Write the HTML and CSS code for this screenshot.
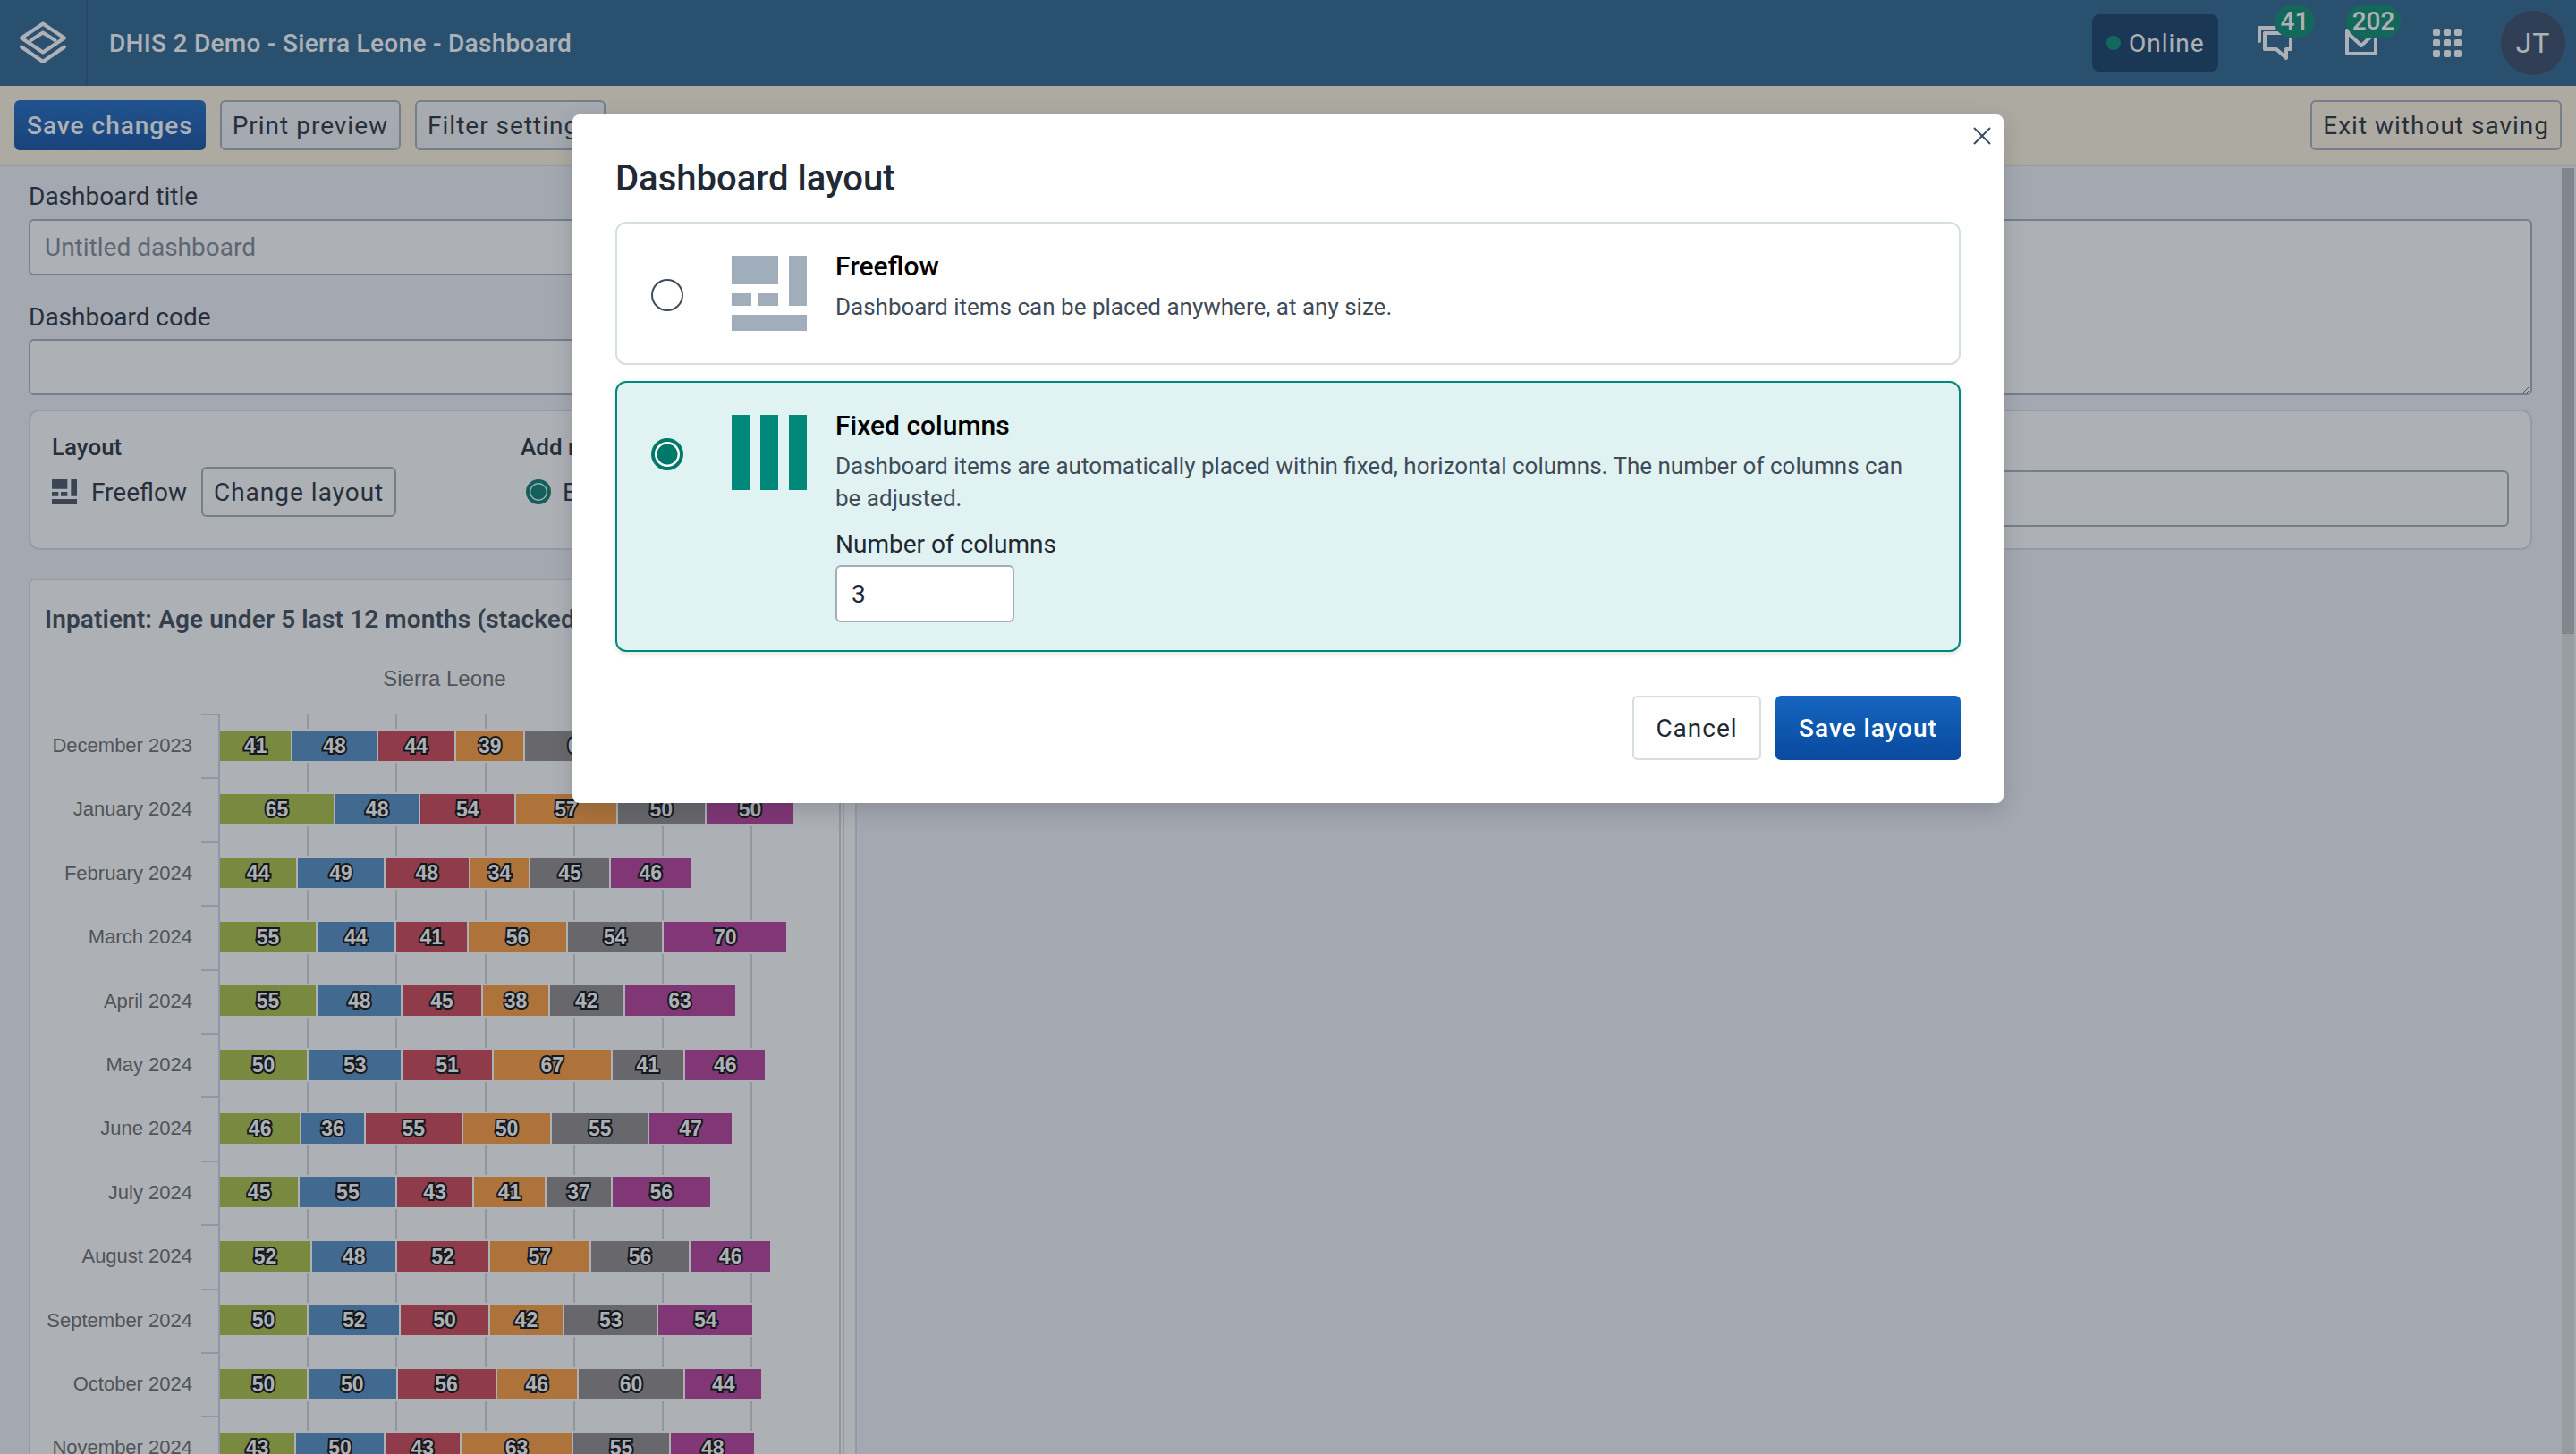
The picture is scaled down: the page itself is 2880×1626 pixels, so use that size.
FILE: index.html
```html
<!DOCTYPE html>
<html lang="en">

<head>
  <meta charset="UTF-8">
  <title>DHIS 2 Demo - Sierra Leone - Dashboard</title>
  <link rel="stylesheet" href="styles.css">
</head>

<body>
  <header class="topbar">
    <div class="logo">
      <svg width="96" height="96" viewBox="0 0 96 96" fill="none" stroke="#fff" stroke-width="4" stroke-linejoin="round" stroke-linecap="round">
        <path d="M24 42.5L48 26.5L72 42.5L48 58.5Z" />
        <path d="M34.5 45L48 36.5L61.500 45" />
        <path d="M24 52.500L48 69L72 52.500" />
      </svg>
    </div>
    <div class="instance-title">DHIS 2 Demo - Sierra Leone - Dashboard</div>
    <div class="online"><span class="online-dot"></span>Online</div>
    <div class="header-icon icon-messages">
      <svg width="40" height="40" viewBox="0 0 40 40" fill="none" stroke="#fff" stroke-width="4" stroke-linejoin="round" stroke-linecap="round">
        <path d="M2 18V3H19" />
        <path d="M8 9H37V27H32V37L21 27H8Z" />
      </svg>
      <span class="badge badge-messages">41</span>
    </div>
    <div class="header-icon icon-mail">
      <svg width="40" height="40" viewBox="0 0 40 40" fill="none" stroke="#fff" stroke-width="4" stroke-linejoin="round" stroke-linecap="round">
        <path d="M4 6H36V32H4Z" />
        <path d="M4 8L20 23L36 8" />
      </svg>
      <span class="badge badge-mail">202</span>
    </div>
    <div class="apps">
      <i></i><i></i><i></i><i></i><i></i><i></i><i></i><i></i><i></i>
    </div>
    <div class="avatar">JT</div>
  </header>

  <div class="edit-bar">
    <button class="btn btn-primary">Save changes</button>
    <button class="btn">Print preview</button>
    <button class="btn">Filter settings</button>
    <button class="btn btn-exit">Exit without saving</button>
  </div>

  <div class="page">
    <main class="content">
      <div class="form-grid">
        <div>
          <label class="field-label">Dashboard title</label>
          <input class="text-input" placeholder="Untitled dashboard">
          <label class="field-label field-label-second">Dashboard code</label>
          <input class="text-input">
        </div>
        <div>
          <label class="field-label">Description</label>
          <textarea class="text-area"></textarea>
        </div>
      </div>

      <section class="options">
        <div class="option-layout">
          <div class="option-title">Layout</div>
          <div class="option-row">
            <svg class="small-icon" width="28" height="28" viewBox="0 0 84 84">
              <path d="M0 0H52V32H0ZM64 0H84V56H64ZM0 42H22V56H0ZM30 42H52V56H30ZM0 66H84V84H0Z" />
            </svg>
            <span class="option-value">Freeflow</span>
            <button class="btn btn-plain">Change layout</button>
          </div>
        </div>
        <div class="option-add">
          <div class="option-title">Add new items to</div>
          <div class="option-row">
            <span class="radio radio-small"></span>
            <span class="option-value">End of dashboard</span>
          </div>
        </div>
        <input class="text-input option-input">
      </section>

      <div class="chart-wrap">
        <section class="chart-card">
          <h2 class="chart-title">Inpatient: Age under 5 last 12 months (stacked)</h2>
          <div class="chart-subtitle">Sierra Leone</div>
          <div class="chart-body">
            <div class="chart-labels">
              <div>December 2023</div>
              <div>January 2024</div>
              <div>February 2024</div>
              <div>March 2024</div>
              <div>April 2024</div>
              <div>May 2024</div>
              <div>June 2024</div>
              <div>July 2024</div>
              <div>August 2024</div>
              <div>September 2024</div>
              <div>October 2024</div>
              <div>November 2024</div>
            </div>
            <div class="chart-plot">
              <div class="plot-row"><div class="bar">
                <span class="seg s1" style="--v:41">41</span><span class="seg s2" style="--v:48">48</span><span class="seg s3" style="--v:44">44</span><span class="seg s4" style="--v:39">39</span><span class="seg s5" style="--v:62">62</span><span class="seg s6" style="--v:50">50</span>
              </div></div>
              <div class="plot-row"><div class="bar">
                <span class="seg s1" style="--v:65">65</span><span class="seg s2" style="--v:48">48</span><span class="seg s3" style="--v:54">54</span><span class="seg s4" style="--v:57">57</span><span class="seg s5" style="--v:50">50</span><span class="seg s6" style="--v:50">50</span>
              </div></div>
              <div class="plot-row"><div class="bar">
                <span class="seg s1" style="--v:44">44</span><span class="seg s2" style="--v:49">49</span><span class="seg s3" style="--v:48">48</span><span class="seg s4" style="--v:34">34</span><span class="seg s5" style="--v:45">45</span><span class="seg s6" style="--v:46">46</span>
              </div></div>
              <div class="plot-row"><div class="bar">
                <span class="seg s1" style="--v:55">55</span><span class="seg s2" style="--v:44">44</span><span class="seg s3" style="--v:41">41</span><span class="seg s4" style="--v:56">56</span><span class="seg s5" style="--v:54">54</span><span class="seg s6" style="--v:70">70</span>
              </div></div>
              <div class="plot-row"><div class="bar">
                <span class="seg s1" style="--v:55">55</span><span class="seg s2" style="--v:48">48</span><span class="seg s3" style="--v:45">45</span><span class="seg s4" style="--v:38">38</span><span class="seg s5" style="--v:42">42</span><span class="seg s6" style="--v:63">63</span>
              </div></div>
              <div class="plot-row"><div class="bar">
                <span class="seg s1" style="--v:50">50</span><span class="seg s2" style="--v:53">53</span><span class="seg s3" style="--v:51">51</span><span class="seg s4" style="--v:67">67</span><span class="seg s5" style="--v:41">41</span><span class="seg s6" style="--v:46">46</span>
              </div></div>
              <div class="plot-row"><div class="bar">
                <span class="seg s1" style="--v:46">46</span><span class="seg s2" style="--v:36">36</span><span class="seg s3" style="--v:55">55</span><span class="seg s4" style="--v:50">50</span><span class="seg s5" style="--v:55">55</span><span class="seg s6" style="--v:47">47</span>
              </div></div>
              <div class="plot-row"><div class="bar">
                <span class="seg s1" style="--v:45">45</span><span class="seg s2" style="--v:55">55</span><span class="seg s3" style="--v:43">43</span><span class="seg s4" style="--v:41">41</span><span class="seg s5" style="--v:37">37</span><span class="seg s6" style="--v:56">56</span>
              </div></div>
              <div class="plot-row"><div class="bar">
                <span class="seg s1" style="--v:52">52</span><span class="seg s2" style="--v:48">48</span><span class="seg s3" style="--v:52">52</span><span class="seg s4" style="--v:57">57</span><span class="seg s5" style="--v:56">56</span><span class="seg s6" style="--v:46">46</span>
              </div></div>
              <div class="plot-row"><div class="bar">
                <span class="seg s1" style="--v:50">50</span><span class="seg s2" style="--v:52">52</span><span class="seg s3" style="--v:50">50</span><span class="seg s4" style="--v:42">42</span><span class="seg s5" style="--v:53">53</span><span class="seg s6" style="--v:54">54</span>
              </div></div>
              <div class="plot-row"><div class="bar">
                <span class="seg s1" style="--v:50">50</span><span class="seg s2" style="--v:50">50</span><span class="seg s3" style="--v:56">56</span><span class="seg s4" style="--v:46">46</span><span class="seg s5" style="--v:60">60</span><span class="seg s6" style="--v:44">44</span>
              </div></div>
              <div class="plot-row"><div class="bar">
                <span class="seg s1" style="--v:43">43</span><span class="seg s2" style="--v:50">50</span><span class="seg s3" style="--v:43">43</span><span class="seg s4" style="--v:63">63</span><span class="seg s5" style="--v:55">55</span><span class="seg s6" style="--v:48">48</span>
              </div></div>
            </div>
          </div>
        </section>
      </div>
    </main>
    <div class="scrollbar"><div class="scrollbar-thumb"></div></div>
  </div>

  <div class="overlay">
    <div class="modal">
      <svg class="modal-close" width="20" height="20" viewBox="0 0 20 20" fill="none" stroke="#404b5a" stroke-width="2">
        <path d="M1 1L19 19M19 1L1 19" />
      </svg>
      <h1 class="modal-title">Dashboard layout</h1>

      <div class="layout-card">
        <span class="radio"></span>
        <svg class="layout-icon icon-freeflow" width="84" height="84" viewBox="0 0 84 84">
          <path d="M0 0H52V32H0ZM64 0H84V56H64ZM0 42H22V56H0ZM30 42H52V56H30ZM0 66H84V84H0Z" />
        </svg>
        <div class="layout-text">
          <div class="layout-name">Freeflow</div>
          <p class="layout-desc">Dashboard items can be placed anywhere, at any size.</p>
        </div>
      </div>

      <div class="layout-card layout-card-selected">
        <span class="radio radio-checked"></span>
        <svg class="layout-icon icon-columns" width="84" height="84" viewBox="0 0 84 84">
          <path d="M0 0H20V84H0ZM32 0H52V84H32ZM64 0H84V84H64Z" />
        </svg>
        <div class="layout-text">
          <div class="layout-name">Fixed columns</div>
          <p class="layout-desc">Dashboard items are automatically placed within fixed, horizontal columns. The number of columns can be adjusted.</p>
          <label class="columns-label">Number of columns</label>
          <input class="columns-input" value="3">
        </div>
      </div>

      <div class="modal-actions">
        <button class="btn btn-cancel">Cancel</button>
        <button class="btn btn-primary btn-large">Save layout</button>
      </div>
    </div>
  </div>
</body>

</html>
```
FILE: styles.css
```css
* {
  box-sizing: border-box;
}

html,
body {
  height: 100%;
  margin: 0;
  overflow: hidden;
}

body {
  display: flex;
  flex-direction: column;
  position: relative;
  background: #f0f2f8;
  color: #212934;
  font-family: Roboto, "Noto Sans", sans-serif;
  font-size: 28px;
}

/* header */
.topbar {
  display: flex;
  align-items: center;
  flex: none;
  height: 96px;
  background: #255f8c;
  color: #fff;
}

.logo {
  flex: none;
  width: 98px;
  height: 96px;
  border-right: 2px solid #1f5480;
}

.instance-title {
  flex: 1;
  padding-left: 24px;
  font-weight: 500;
  letter-spacing: 0.3px;
}

.online {
  display: flex;
  align-items: center;
  width: 141px;
  height: 64px;
  padding-left: 16px;
  border-radius: 8px;
  background: #0a375f;
  letter-spacing: 1px;
}

.online-dot {
  width: 16px;
  height: 16px;
  margin-right: 9px;
  border-radius: 50%;
  background: #008769;
}

.header-icon {
  position: relative;
  flex: none;
  width: 40px;
  height: 40px;
}

.icon-messages {
  margin-left: 44px;
}

.icon-mail {
  margin-left: 56px;
}

.badge {
  position: absolute;
  top: -22px;
  height: 36px;
  border-radius: 18px;
  background: #008769;
  font-size: 28px;
  font-weight: 500;
  line-height: 36px;
  text-align: center;
}

.badge-messages {
  left: 19px;
  width: 45px;
}

.badge-mail {
  left: 3px;
  width: 61px;
}

.apps {
  display: grid;
  flex: none;
  grid-template-columns: repeat(3, 8px);
  gap: 4px;
  margin-left: 60px;
}

.apps i {
  height: 8px;
  border-radius: 2px;
  background: #fff;
}

.avatar {
  flex: none;
  width: 72px;
  height: 72px;
  margin: 0 12px 0 44px;
  border-radius: 50%;
  background: #2f435f;
  font-size: 32px;
  letter-spacing: 1px;
  line-height: 72px;
  text-align: center;
}

/* buttons */
.btn {
  height: 56px;
  padding: 0 12px;
  border: 2px solid #a0adba;
  border-radius: 6px;
  background: linear-gradient(#f6f8fa, #f0f2f5);
  color: #212934;
  font-family: inherit;
  font-size: 28px;
  letter-spacing: 1px;
}

.btn-primary {
  padding: 0 14px;
  border: 0;
  background: linear-gradient(#1565c0, #094a9e);
  color: #fff;
  font-weight: 500;
}

.btn-exit {
  margin-left: auto;
  background: transparent;
}

.btn-plain {
  background: transparent;
}

.btn-cancel {
  width: 144px;
  height: 72px;
  border-color: #d5dde5;
  background: #fff;
}

.btn-large {
  width: 207px;
  height: 72px;
}

/* edit bar */
.edit-bar {
  display: flex;
  flex: none;
  gap: 16px;
  height: 90px;
  padding: 16px;
  border-bottom: 2px solid #d5dde5;
  background: #fff5df;
}

/* page */
.page {
  display: flex;
  flex: 1;
  min-height: 0;
}

.content {
  flex: 1;
  min-width: 0;
  padding: 16px 33px 0 32px;
  overflow: hidden;
}

.scrollbar {
  flex: none;
  width: 16px;
  margin-top: 2px;
  padding-right: 2px;
}

.scrollbar-thumb {
  height: 521px;
  background: #b5b7b9;
  box-shadow: 0 1100px 0 1100px #dddfdc;
  clip-path: inset(0 0 -1100px 0);
}

.form-grid {
  display: grid;
  grid-template-columns: 1fr 1fr;
  gap: 32px;
}

.field-label {
  display: block;
  height: 36px;
  margin-bottom: 7px;
  line-height: 36px;
}

.field-label-second {
  margin-top: 29px;
  margin-bottom: 6px;
}

.text-input {
  display: block;
  width: 100%;
  height: 63px;
  padding: 0 16px;
  border: 2px solid #a0adba;
  border-radius: 6px;
  background: #fff;
  font-family: inherit;
  font-size: 28px;
}

.text-input::placeholder {
  color: #7a8592;
  opacity: 1;
}

.text-area {
  display: block;
  width: 100%;
  height: 197px;
  border: 2px solid #a0adba;
  border-radius: 6px;
  background: #fff;
}

.options {
  display: flex;
  margin-top: 16px;
  height: 157px;
  padding: 22px 24px;
  border: 2px solid #d5dde5;
  border-radius: 12px;
  background: #fff;
}

.option-layout {
  width: 524px;
}

.option-add {
  width: 600px;
}

.option-title {
  height: 36px;
  font-size: 26px;
  font-weight: 500;
  line-height: 36px;
}

.option-row {
  display: flex;
  align-items: center;
  gap: 16px;
  margin-top: 4px;
}

.small-icon {
  fill: #404b5a;
}

.option-value {
  white-space: nowrap;
}

.option-add .option-row {
  gap: 13px;
  margin-left: 6px;
  height: 56px;
}

.option-input {
  flex: 1;
  margin-top: 44px;
}

/* chart */
.chart-wrap {
  width: 926px;
  height: 1000px;
  margin-top: 32px;
  padding-right: 12px;
  border-right: 2px solid #d5dde5;
  background: #fff;
}

.chart-card {
  height: 100%;
  padding: 0 16px;
  border: 2px solid #d5dde5;
  border-radius: 6px 0 0 0;
}

.chart-title {
  margin: 28px 0 0;
  font-size: 28px;
  font-weight: 600;
  letter-spacing: 0.12px;
  line-height: 32px;
  color: #374450;
  white-space: nowrap;
}

.chart-subtitle {
  margin: 36px 0 0;
  padding-left: 18px;
  color: #666;
  font-family: "Liberation Sans", Arial, sans-serif;
  font-size: 24px;
  line-height: 28px;
  text-align: center;
}

.chart-body {
  display: flex;
  margin: 25px 0 0 -16px;
}

.chart-labels {
  flex: none;
  width: 181px;
  margin-right: 29px;
  color: #666;
  font-family: "Liberation Sans", Arial, sans-serif;
  font-size: 22px;
  text-align: right;
}

.chart-labels div {
  height: 71.4px;
  line-height: 71.4px;
  white-space: nowrap;
}

.chart-plot {
  flex: none;
  width: 697px;
  border-left: 2px solid #ccd6eb;
  background: repeating-linear-gradient(to right, transparent 0 97.2px, #d2d4d7 97.2px 99.2px);
}

.plot-row {
  position: relative;
  display: flex;
  align-items: center;
  height: 71.4px;
}

.plot-row::before {
  content: "";
  position: absolute;
  left: -21px;
  top: 0;
  width: 20px;
  height: 2px;
  background: #ccd6eb;
}

.bar {
  display: flex;
  gap: 2px;
  height: 34px;
  background: #fff;
  box-shadow: 2px 0 #fff, 0 2px #fff, 0 -2px #fff;
}

.seg {
  flex: none;
  width: calc(var(--v) * 1.985px - 2px);
  color: #fff;
  font-family: "Liberation Sans", Arial, sans-serif;
  font-size: 23px;
  font-weight: 700;
  line-height: 34px;
  text-align: center;
  -webkit-text-stroke: 4px #000;
  paint-order: stroke fill;
}

.s1 {
  background: #a9be3b;
}

.s2 {
  background: #4d89c0;
}

.s3 {
  background: #cd3c4c;
}

.s4 {
  background: #ff9935;
}

.s5 {
  background: #8c8785;
}

.s6 {
  background: #b63596;
}

/* modal */
.overlay {
  position: absolute;
  inset: 0;
  display: flex;
  justify-content: center;
  align-items: flex-start;
  padding-top: 128px;
  background: rgba(50, 57, 70, 0.4);
}

.modal {
  position: relative;
  width: 1600px;
  height: 770px;
  padding: 48px;
  border-radius: 8px;
  background: #fff;
  box-shadow: 0 8px 24px rgba(33, 41, 52, 0.2);
}

.modal-close {
  position: absolute;
  top: 14px;
  right: 14px;
}

.modal-title {
  height: 48px;
  margin: 0 0 24px;
  font-size: 40px;
  font-weight: 500;
  line-height: 48px;
}

.layout-card {
  display: flex;
  align-items: flex-start;
  height: 160px;
  margin-bottom: 18px;
  padding: 36px 38px;
  border: 2px solid #d5dde5;
  border-radius: 12px;
}

.layout-card-selected {
  height: 303px;
  border-color: #00897b;
  background: #e0f2f1;
  box-shadow: 0 2px 6px rgba(33, 41, 52, 0.15);
}

.radio {
  flex: none;
  display: block;
  width: 36px;
  height: 36px;
  margin-top: 26px;
  border: 2px solid #404b5a;
  border-radius: 50%;
  background: #fff;
}

.radio-checked {
  border: 4px solid #00796b;
  background: radial-gradient(circle, #00796b 0 11px, #fff 12px);
}

.radio-small {
  width: 28px;
  height: 28px;
  margin-top: 0;
  border: 4px solid #00796b;
  background: radial-gradient(circle, #00796b 0 8px, #fff 9px);
}

.layout-icon {
  flex: none;
  margin: 0 32px 0 54px;
}

.icon-freeflow {
  fill: #a0adba;
}

.icon-columns {
  fill: #00897b;
}

.layout-text {
  flex: 1;
}

.layout-name {
  height: 24px;
  color: #000;
  font-size: 30px;
  font-weight: 500;
  line-height: 24px;
}

.layout-desc {
  margin: 15px 0 0;
  color: #404b5a;
  font-size: 26px;
  line-height: 36px;
}

.columns-label {
  display: block;
  margin-top: 16px;
  line-height: 36px;
}

.columns-input {
  display: block;
  width: 200px;
  height: 64px;
  margin-top: 5px;
  padding: 0 16px;
  border: 2px solid #a0adba;
  border-radius: 6px;
  background: #fff;
  color: #212934;
  font-family: inherit;
  font-size: 28px;
}

.modal-actions {
  display: flex;
  justify-content: flex-end;
  gap: 16px;
  margin-top: 49px;
}
```
